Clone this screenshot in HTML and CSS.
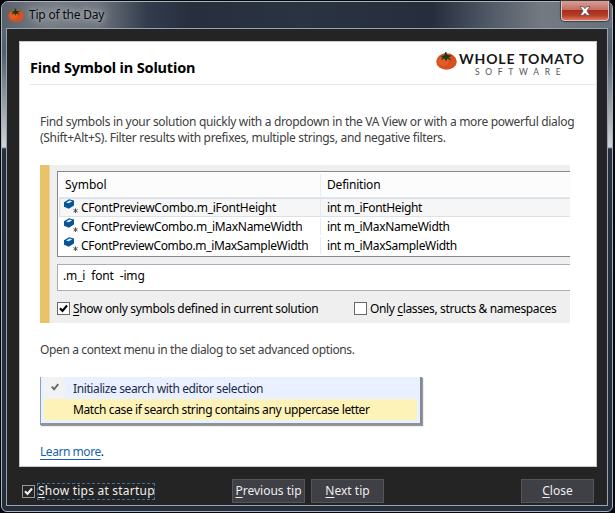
FILE: index.html
```html
<!DOCTYPE html>
<html lang="en">
<head>
<meta charset="utf-8">
<title>Tip of the Day</title>
<link rel="stylesheet" href="styles.css">
</head>
<body>
<svg class="defs" width="0" height="0" aria-hidden="true">
  <symbol id="tomato" viewBox="0 0 20 18">
    <ellipse cx="10" cy="10" rx="9.8" ry="7.8" fill="#d9501f"/>
    <ellipse cx="7" cy="10" rx="5" ry="4" fill="#ee6c31" opacity=".45"/>
    <path d="M4 5 8 4 8.6 1 10 1.2 10.4 3.6 15.5 4.5 12 6 15 9 10.8 7.2 9.5 10 8.3 7 4.5 8.5 6.5 5.7z" fill="#183d16"/>
  </symbol>
  <symbol id="field" viewBox="0 0 15 15">
    <path d="M0 3.3 5 .2 10 1.6V6.4L4.8 9.8 0 7.8z" fill="#07549b"/>
    <path d="M2 3.4 5.6 1.5 8.3 2.3 4.7 4.2z" fill="#e5f2fa"/>
    <path d="M11.5 9.4v4.6M9.5 10.5l4 2.4M13.5 10.5l-4 2.4" stroke="#444" stroke-width=".9"/>
  </symbol>
  <symbol id="check" viewBox="0 0 13 13">
    <path d="M3 6.2 5.5 9 10 3.5" fill="none" stroke="currentColor" stroke-width="2.1"/>
  </symbol>
</svg>
<div class="window">
  <header class="titlebar">
    <svg class="app-icon"><use href="#tomato"/></svg>
    <span class="caption">Tip of the Day</span>
    <div class="window-close"><svg viewBox="0 0 12 10"><path d="M1 .7h3.3L6 2.7 7.7.7H11L7.9 5 11 9.3H7.7L6 7.3 4.3 9.3H1L4.1 5z" fill="#fff" stroke="#5c4650" stroke-width=".8"/></svg></div>
  </header>
  <div class="client">
    <main class="page">
      <div class="page-head">
        <h1>Find Symbol in Solution</h1>
        <div class="brand">
          <svg class="brand-icon"><use href="#tomato"/></svg>
          <div class="brand-text"><div class="brand-name">WHOLE TOMATO</div><div class="brand-sub">SOFTWARE</div></div>
        </div>
      </div>
      <div class="content">
        <p class="intro"><span class="l1">Find symbols in your solution quickly with a dropdown in the VA View or with a more powerful dialog</span><br><span class="l2">(Shift+Alt+S). Filter results with prefixes, multiple strings, and negative filters.</span></p>
        <section class="example">
          <div class="list">
            <div class="row head"><div class="cell">Symbol</div><div class="cell def">Definition</div></div>
            <div class="row selected"><div class="cell sym"><svg><use href="#field"/></svg><span class="n1">CFontPreviewCombo.m_iFontHeight</span></div><div class="cell def">int m_iFontHeight</div></div>
            <div class="row"><div class="cell sym"><svg><use href="#field"/></svg><span class="n2">CFontPreviewCombo.m_iMaxNameWidth</span></div><div class="cell def">int m_iMaxNameWidth</div></div>
            <div class="row"><div class="cell sym"><svg><use href="#field"/></svg><span class="n3">CFontPreviewCombo.m_iMaxSampleWidth</span></div><div class="cell def">int m_iMaxSampleWidth</div></div>
          </div>
          <div class="query">.m_i&nbsp; font&nbsp; -img</div>
          <div class="filters">
            <div class="option first"><span class="box"><svg><use href="#check"/></svg></span><span class="o1"><u>S</u>how only symbols defined in current solution</span></div>
            <div class="option"><span class="box"></span><span class="o2">Only <u>c</u>lasses, structs &amp; namespaces</span></div>
          </div>
        </section>
        <p class="hint">Open a context menu in the dialog to set advanced options.</p>
        <div class="menu">
          <div class="item"><span class="gutter"><svg><use href="#check"/></svg></span><span class="m1">Initialize search with editor selection</span></div>
          <div class="item active"><span class="gutter"></span><span class="m2">Match case if search string contains any uppercase letter</span></div>
        </div>
        <p class="more"><a>Learn more</a>.</p>
      </div>
    </main>
    <footer class="actions">
      <div class="startup"><span class="box dark"><svg><use href="#check"/></svg></span><span class="focus"><u>S</u>how tips at startup</span></div>
      <div class="button prev"><span><u>P</u>revious tip</span></div>
      <div class="button next"><span><u>N</u>ext tip</span></div>
      <div class="button close"><span><u>C</u>lose</span></div>
    </footer>
  </div>
</div>
</body>
</html>
```
FILE: styles.css
```css
* { box-sizing: border-box; }
body { margin: 0; width: 615px; height: 513px; overflow: hidden; background: #05070b; padding: 1px 2px 1px 1px; font: 12px/16px "Noto Sans", "Open Sans", sans-serif; color: #111; }
.defs { position: absolute; }
h1, p { margin: 0; }
span { white-space: nowrap; }
u { text-underline-offset: 2px; text-decoration-thickness: 1px; text-decoration-skip-ink: none; }
.window { height: 511px; border: 1px solid #a9b2bd; border-radius: 7px 7px 6px 6px; padding: 0 4px 5px; background: linear-gradient(90deg, transparent 8px, #262d3b 8px, #262d3b 600px, transparent 600px), linear-gradient(#65717e 0, #51606d 50px, #d0d4d8 145px, #262f3d 147px, #252e3c 100%); }
.titlebar { height: 26px; margin: 0 -4px; padding-left: 6px; display: flex; align-items: flex-start; border-radius: 6px 6px 0 0; background: linear-gradient(90deg, #59616a 0, #777d84 45px, #70767f 95px, #323c4c 145px, #272f3e 190px, #2a3341 300px, #262e3d 430px, #525b68 490px, #747a82 540px, #66717d 100%); }
.app-icon { width: 16px; height: 16px; margin-top: 5px; }
.caption { margin: 5px 0 0 5px; font-size: 12px; letter-spacing: -.2px; color: #080b10; text-shadow: 0 0 5px #bbc0c5, 0 0 9px #a3a8ae, 0 0 12px #a3a8ae; }
.window-close { margin: -1px 3px 0 auto; width: 48px; height: 20px; display: flex; align-items: center; justify-content: center; border: 1px solid #d9c2c2; border-top: 0; border-radius: 0 0 4px 4px; background: linear-gradient(#d6a095, #c46c5d 47%, #a52e1f 50%, #b63c27 75%, #db745a); box-shadow: 0 0 1px 1px #443c44; }
.window-close svg { width: 12px; height: 10px; }
.client { height: 478px; border: 1px solid #98a3ad; background: #242424; padding: 12px 9px 0 12px; }
.page { width: 578px; height: 426px; border: 1px solid #c9c9c9; background: #fff; }
.page-head { height: 43px; margin-left: 10px; border-bottom: 1px solid #e8e8e8; display: flex; justify-content: space-between; }
h1 { font: bold 14.5px/20px "Noto Sans", "Open Sans", sans-serif; letter-spacing: -.15px; color: #000; padding-top: 15px; }
.brand { display: flex; padding: 9px 10px 0 0; }
.brand-icon { width: 21px; height: 19px; margin-right: 2px; }
.brand-name { font: bold 14px/16px Lato, sans-serif; letter-spacing: .83px; width: 127px; white-space: nowrap; color: #161616; }
.brand-sub { font: 8.5px/10px Lato, sans-serif; letter-spacing: 5.7px; padding-left: 16px; color: #555; }
.content { padding: 29px 26px 0 20px; }
.intro, .hint { color: #404040; }
.intro { height: 32px; letter-spacing: -.31px; }
.example { width: 530px; height: 158px; margin-top: 19px; padding: 6px 0 0 8px; border-left: 9px solid #eac267; background: #efefef; box-shadow: inset 1px 0 #e3d6b4; }
.list { height: 86px; border: 1px solid #828790; border-right: 0; background: #fff; padding: 1px 0 0 1px; color: #000; }
.row { height: 19px; display: flex; align-items: center; border: 1px solid transparent; border-right: 0; border-left: 0; }
.row.head { height: 25px; background: #fcfcfc; border-bottom-color: #e0e8f0; padding-bottom: 1px; }
.row.selected { background: #f6f6f6; border-color: #dce1e7; border-left: 1px solid #dce1e7; }
.row.selected .sym { width: 260px; padding-left: 4px; }
.cell { width: 261px; padding-left: 6px; flex: none; white-space: nowrap; }
.def { border-left: 1px solid #e4edf5; padding-left: 6px; height: 100%; line-height: 17px; letter-spacing: -.33px; }
.head .def { line-height: 22px; letter-spacing: -.2px; }
.n1 { letter-spacing: -.26px; }
.n2 { letter-spacing: -.3px; }
.n3 { letter-spacing: -.34px; }
.sym { display: flex; align-items: center; padding-left: 5px; }
.sym svg { width: 15px; height: 15px; margin: -2px 2px 0 0; flex: none; }
.query { margin-top: 7px; height: 27px; border: 1px solid #abadb3; border-right: 0; background: #fff; padding: 3px 5px; letter-spacing: -.15px; color: #000; }
.filters { display: flex; padding-top: 11px; color: #000; }
.option { display: flex; align-items: center; height: 13px; }
.option.first { width: 297px; }
.o1 { letter-spacing: -.33px; }
.o2 { letter-spacing: -.36px; }
.box { width: 13px; height: 13px; border: 1px solid #686868; background: #fff; margin-right: 3px; flex: none; }
.box svg { display: block; width: 13px; height: 13px; margin: -1px; }
.hint { padding-top: 19px; letter-spacing: -.37px; }
.menu { width: 382px; height: 48px; margin-top: 19px; padding: 0 3px 3px; border: 1px solid #929fb2; border-top: 0; border-right: 2px solid #858b96; border-bottom: 2px solid #8c929c; background: #e9f0ff; box-shadow: 1px 1px 1px #999; }
.item { height: 22px; display: flex; align-items: center; color: #1c2b48; }
.item.active { background: #fdf2b7; color: #000; height: 21px; }
.m1, .m2 { padding-top: 1px; }
.m1 { letter-spacing: -.39px; }
.m2 { letter-spacing: -.4px; }
.gutter { width: 21px; margin-right: 8px; height: 22px; background: #f1f2f4; color: #666; display: flex; align-items: center; justify-content: center; }
.gutter svg { width: 12px; height: 12px; margin-top: -2px; }
.active .gutter { background: none; }
.more { padding-top: 19px; letter-spacing: -.45px; }
.more a { color: #1764ac; text-decoration: underline; text-underline-offset: 3px; text-decoration-skip-ink: none; }
.actions { display: flex; color: #eee; padding: 12px 0 0 3px; }
.startup { width: 210px; height: 24px; display: flex; align-items: center; }
.box.dark { border-color: #999; background: #252526; margin-right: 2px; }
.focus { border: 1px dashed #3876a9; height: 17px; line-height: 14px; width: 118px; letter-spacing: .22px; }
.button { width: 73px; height: 24px; border: 1px solid #55555a; background: #3f3f46; text-align: center; line-height: 22px; white-space: nowrap; }
.next { margin-left: 6px; }
.close { margin-left: 137px; }
```
